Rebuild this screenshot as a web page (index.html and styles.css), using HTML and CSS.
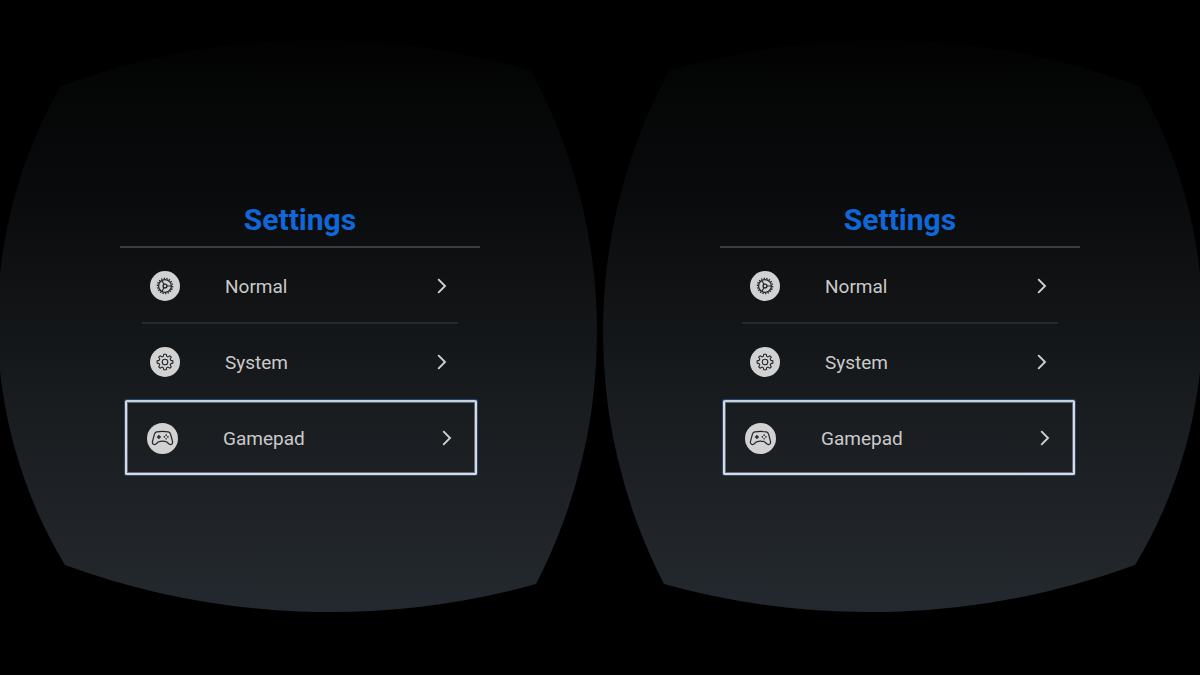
FILE: index.html
```
<!DOCTYPE html>
<html lang="en">
<head>
  <meta charset="UTF-8">
  <meta name="viewport" content="width=device-width, initial-scale=1.0">
  <title>Settings</title>
  <link rel="stylesheet" href="styles.css">
</head>
<body>

  <!-- Shared shapes -->
  <svg class="sprite" aria-hidden="true">
    <defs>
      <linearGradient id="sky" gradientUnits="userSpaceOnUse" x1="0" y1="40" x2="0" y2="612">
        <stop offset="0" stop-color="#020202" />
        <stop offset="0.1" stop-color="#050606" />
        <stop offset="0.28" stop-color="#0a0b0d" />
        <stop offset="0.45" stop-color="#111315" />
        <stop offset="0.63" stop-color="#181c1f" />
        <stop offset="0.8" stop-color="#1e2226" />
        <stop offset="1" stop-color="#24292f" />
      </linearGradient>
    </defs>
    <symbol id="lens" viewBox="0 0 600 675" preserveAspectRatio="none">
      <path fill="url(#sky)" d="M61 86A746 746 0 0 1 531 71A550 550 0 0 1 536 584A770 770 0 0 1 65 565A471 471 0 0 1 61 86Z" />
    </symbol>
    <symbol id="icon-normal" viewBox="0 0 30 30">
      <circle cx="15" cy="15" r="15" fill="#d2d2d2" />
      <g fill="none" stroke="#24282c">
        <circle cx="15" cy="15" r="7.6" stroke-width="1.4" pathLength="36" stroke-dasharray="1 1" />
        <circle cx="15" cy="15" r="6.4" stroke-width="1.3" />
        <circle cx="15" cy="15" r="1.9" stroke-width="1.4" />
        <path stroke-width="1.2" d="M17 15H21.4M14 13.3L11.8 9.5M14 16.7L11.8 20.5" />
      </g>
    </symbol>
    <symbol id="icon-system" viewBox="0 0 30 30">
      <circle cx="15" cy="15" r="15" fill="#d2d2d2" />
      <g fill="none" stroke="#24282c" stroke-width="1.1" stroke-linejoin="round">
        <path d="M13.8 7.2H16.2L16.7 9.3L18.1 9.9L19.9 8.8L21.3 10.2L20.2 12L20.8 13.4L22.9 13.9V16.1L20.8 16.6L20.2 18L21.3 19.8L19.9 21.2L18.1 20.1L16.7 20.7L16.2 22.8H13.8L13.3 20.7L11.9 20.1L10.1 21.2L8.7 19.8L9.8 18L9.2 16.6L7.1 16.1V13.9L9.2 13.4L9.8 12L8.7 10.2L10.1 8.8L11.9 9.9L13.3 9.3Z" />
        <circle cx="15" cy="15" r="2.8" />
      </g>
    </symbol>
    <symbol id="icon-gamepad" viewBox="0 0 30 30">
      <circle cx="15" cy="15" r="15" fill="#d2d2d2" />
      <path fill="none" stroke="#24282c" stroke-width="1.2" stroke-linejoin="round" d="M9.5 8.6Q15 7.8 20.5 8.6Q22.2 8.9 22.8 10.8L24.7 17.8Q25.1 20.3 23.4 20.8Q22.3 21 21 20L19.2 18.4Q15 16.6 10.8 18.4L9 20Q7.7 21 6.6 20.8Q4.9 20.3 5.3 17.8L7.2 10.8Q7.8 8.9 9.5 8.6Z" />
      <path stroke="#24282c" stroke-width="1.4" d="M9.6 13.5H13.4M11.5 11.6V15.4" />
      <g fill="#24282c">
        <circle cx="18.5" cy="11.8" r="0.8" />
        <circle cx="18.5" cy="15.2" r="0.8" />
        <circle cx="16.8" cy="13.5" r="0.8" />
        <circle cx="20.2" cy="13.5" r="0.8" />
      </g>
    </symbol>
    <symbol id="chevron" viewBox="0 0 10 16">
      <path fill="none" stroke="#d0d0d0" stroke-width="1.9" d="M1.2 1.2L8 8L1.2 14.8" />
    </symbol>
  </svg>

  <main class="viewer">
    <section class="eye eye-left">
      <svg class="lens" aria-hidden="true"><use href="#lens" /></svg>
      <div class="menu">
        <h1>Settings</h1>
        <nav>
          <button class="item" type="button">
            <svg class="icon" aria-hidden="true"><use href="#icon-normal" /></svg>
            <span>Normal</span>
            <svg class="arrow" aria-hidden="true"><use href="#chevron" /></svg>
          </button>
          <button class="item" type="button">
            <svg class="icon" aria-hidden="true"><use href="#icon-system" /></svg>
            <span>System</span>
            <svg class="arrow" aria-hidden="true"><use href="#chevron" /></svg>
          </button>
          <button class="item selected" type="button">
            <svg class="icon" aria-hidden="true"><use href="#icon-gamepad" /></svg>
            <span>Gamepad</span>
            <svg class="arrow" aria-hidden="true"><use href="#chevron" /></svg>
          </button>
        </nav>
      </div>
    </section>

    <section class="eye eye-right">
      <svg class="lens" aria-hidden="true"><use href="#lens" /></svg>
      <div class="menu">
        <h1>Settings</h1>
        <nav>
          <button class="item" type="button">
            <svg class="icon" aria-hidden="true"><use href="#icon-normal" /></svg>
            <span>Normal</span>
            <svg class="arrow" aria-hidden="true"><use href="#chevron" /></svg>
          </button>
          <button class="item" type="button">
            <svg class="icon" aria-hidden="true"><use href="#icon-system" /></svg>
            <span>System</span>
            <svg class="arrow" aria-hidden="true"><use href="#chevron" /></svg>
          </button>
          <button class="item selected" type="button">
            <svg class="icon" aria-hidden="true"><use href="#icon-gamepad" /></svg>
            <span>Gamepad</span>
            <svg class="arrow" aria-hidden="true"><use href="#chevron" /></svg>
          </button>
        </nav>
      </div>
    </section>
  </main>

</body>
</html>
```
FILE: styles.css
```
* {
  box-sizing: border-box;
}
body {
  margin: 0;
  background-color: #000;
  color: #cacaca;
  font-family: Roboto, sans-serif;
}
.sprite {
  position: absolute;
  width: 0;
  height: 0;
}

.viewer {
  display: grid;
  grid-template-columns: 1fr 1fr;
  min-height: 100vh;
}
.eye {
  display: grid;
  overflow: hidden;
}
/* lens and menu share one cell, the menu sits on top */
.lens,
.menu {
  grid-area: 1 / 1;
}
.lens {
  width: 100%;
  height: 100%;
}
.eye-right .lens {
  transform: scaleX(-1);
}

.menu {
  z-index: 1;
  width: 60%;
  place-self: center;
}
h1 {
  margin: 0;
  padding-bottom: 6px;
  border-bottom: 2px solid #3c3e40;
  color: #1068d8;
  font-size: 30px;
  font-weight: 700;
  line-height: 40px;
  text-align: center;
}
nav {
  display: flex;
  flex-direction: column;
}
.item {
  display: flex;
  align-items: center;
  gap: 45px;
  height: 76px;
  margin: 0 22px;
  padding: 0 11px 0 8px;
  border: none;
  background: none;
  color: inherit;
  font-family: inherit;
  font-size: 19px;
  text-align: left;
  cursor: pointer;
}
.item:first-child {
  padding-top: 2px;
  border-bottom: 2px solid #26282b;
}
.item span {
  flex: 1;
}
.icon {
  width: 30px;
  height: 30px;
}
.arrow {
  width: 10px;
  height: 16px;
}

.item.selected {
  height: 75px;
  margin: 0 3px 0 5px;
  padding: 1px 23px 0 20px;
  border: 2px solid #d8dadd;
  border-top-color: #c6d2e4;
  border-radius: 2px;
  box-shadow: 0 0 0 1px rgba(40, 100, 180, 0.6), inset 0 0 0 1px rgba(216, 218, 221, 0.4);
}
.selected .icon {
  width: 31px;
  height: 31px;
}
/* the highlighted row floats nearer, so each eye sees it shifted */
.eye-right .selected {
  margin: 0 5px 0 3px;
}
```
